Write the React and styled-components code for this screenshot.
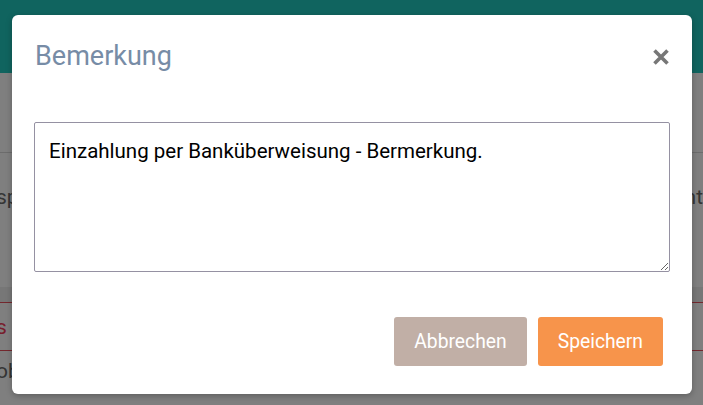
import React, { useState } from "react";
import styled, { createGlobalStyle } from "styled-components";

const GlobalStyle = createGlobalStyle`
  html, body {
    margin: 0;
    padding: 0;
    width: 703px;
    height: 405px;
    overflow: hidden;
    font-family: Roboto, "Liberation Sans", sans-serif;
  }
`;

const Page = styled.div`
  position: relative;
  width: 703px;
  height: 405px;
  background: #ffffff;
  overflow: hidden;
`;

const TopBar = styled.div`
  height: 73px;
  background: #21c9bf;
`;

const Row = styled.div`
  display: flex;
  align-items: ${(p) => (p.top ? "flex-start" : "center")};
  justify-content: space-between;
  height: ${(p) => p.h}px;
  padding-top: ${(p) => p.top || 0}px;
  background: ${(p) => p.bg || "#ffffff"};
  border-bottom: ${(p) => (p.line ? `1px solid ${p.line}` : "none")};
  box-sizing: border-box;
  font-size: 21px;
  color: ${(p) => p.color || "#6a6a6a"};
`;

const Cut = styled.span`
  margin-left: -4px;
`;

const Overlay = styled.div`
  position: absolute;
  inset: 0;
  background: rgba(0, 0, 0, 0.5);
  display: flex;
  align-items: flex-start;
  padding: 15px 0 0 12px;
`;

const Modal = styled.div`
  width: 680px;
  height: 379px;
  box-sizing: border-box;
  background: #ffffff;
  border-radius: 6px;
  display: flex;
  flex-direction: column;
  box-shadow: 0 2px 6px rgba(0, 0, 0, 0.25);
`;

const Header = styled.div`
  display: flex;
  align-items: center;
  justify-content: space-between;
  padding: 23px 23px 0 23px;
  height: 36px;
`;

const Title = styled.h2`
  margin: 0;
  font-size: 27px;
  line-height: 36px;
  font-weight: 400;
  color: #778ca6;
`;

const Close = styled.button`
  border: none;
  background: none;
  padding: 0;
  width: 16px;
  height: 16px;
  margin-top: 2px;
  cursor: pointer;
  display: flex;
`;

const Body = styled.div`
  padding: 48px 22px 0 22px;
`;

const Note = styled.textarea`
  display: block;
  width: 636px;
  height: 150px;
  box-sizing: border-box;
  border: 1px solid #9591a2;
  border-radius: 2px;
  padding: 15px 14px;
  font-family: Roboto, "Liberation Sans", sans-serif;
  font-size: 20.5px;
  line-height: 27px;
  color: #000;
  outline: none;
`;

const Footer = styled.div`
  display: flex;
  justify-content: flex-end;
  gap: 11px;
  padding: 45px 29px 0 0;
`;

const Button = styled.button`
  height: 49px;
  padding: 0 20px;
  border: none;
  border-radius: 3px;
  background: ${(p) => (p.primary ? "#f7944b" : "#c1afa6")};
  color: #ffffff;
  font-family: Roboto, "Liberation Sans", sans-serif;
  font-size: 19.3px;
  cursor: pointer;
`;

const App = () => {
  const [text, setText] = useState(
    "Einzahlung per Banküberweisung - Bermerkung."
  );

  return (
    <>
      <GlobalStyle />
      <Page>
        <TopBar />
        <Row h={80} line="#d8d8d8" />
        <Row h={134} top={32}>
          <Cut>sp</Cut>
          <span>nt</span>
        </Row>
        <Row h={16} bg="#eeeeee" line="#e8505c" />
        <Row h={48} color="#f03c5a" line="#e8505c">
          <Cut>s</Cut>
        </Row>
        <Row h={54} top={8} color="#6a6a6a">
          <Cut>ob</Cut>
        </Row>
        <Overlay>
          <Modal>
            <Header>
              <Title>Bemerkung</Title>
              <Close aria-label="Schließen">
                <svg width="16" height="16" viewBox="0 0 16 16">
                  <path
                    d="M1.5 1.5 L14.5 14.5 M14.5 1.5 L1.5 14.5"
                    stroke="#777777"
                    strokeWidth="3.6"
                    strokeLinecap="butt"
                  />
                </svg>
              </Close>
            </Header>
            <Body>
              <Note value={text} onChange={(e) => setText(e.target.value)} />
            </Body>
            <Footer>
              <Button>Abbrechen</Button>
              <Button primary>Speichern</Button>
            </Footer>
          </Modal>
        </Overlay>
      </Page>
    </>
  );
};

export default App;
